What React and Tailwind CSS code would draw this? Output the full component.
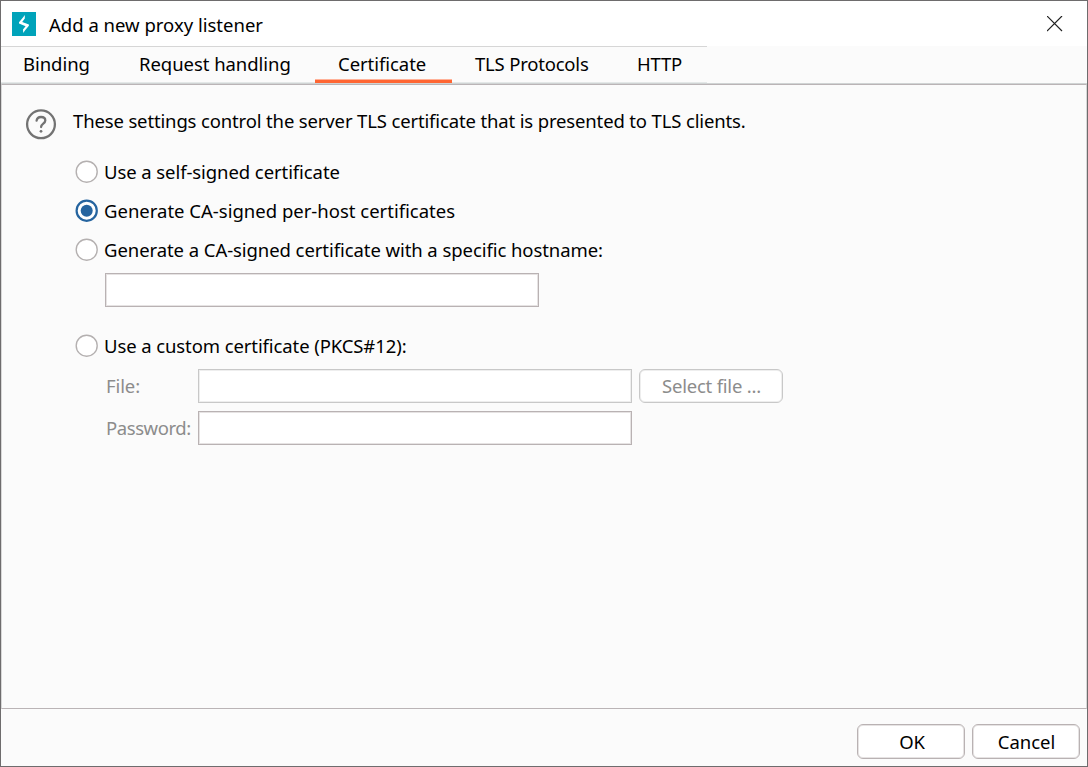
import React from "react";

const tabs = [
  { label: "Binding", box: "w-[90px] pl-[22px]", track: "tracking-[-0.05px]" },
  { label: "Request handling", box: "w-[224px] pl-[48px]", track: "tracking-[-0.05px]" },
  { label: "Certificate", box: "w-[137px] pl-[23px]", track: "tracking-[-0.05px]", active: true },
  { label: "TLS Protocols", box: "w-[137px] pl-[23px]", track: "tracking-[-0.2px]" },
  { label: "HTTP", box: "w-[118px] pl-[48px]", track: "tracking-[-0.2px]" },
];

function Radio({ label, checked, track }) {
  return (
    <label className="flex h-[39px] items-center">
      <svg className="mr-[5px] size-6 shrink-0" viewBox="0 0 24 24" fill="none">
        {checked ? (
          <>
            <circle cx="11.7" cy="11.7" r="10.1" fill="#fff" stroke="#25649f" strokeWidth="2.2" />
            <circle cx="11.7" cy="11.7" r="6" fill="#25649f" />
          </>
        ) : (
          <circle cx="11.7" cy="11.7" r="10.5" fill="#fff" stroke="#b4b0b0" strokeWidth="1.4" />
        )}
      </svg>
      <span className={track}>{label}</span>
    </label>
  );
}

function Titlebar() {
  return (
    <header className="flex h-[45px] shrink-0 items-center bg-white pl-[11px]">
      <svg className="size-6" viewBox="0 0 24 24">
        <rect width="24" height="24" fill="#00a3ba" />
        <path d="M12.8 3 L12.8 6.4 L10.2 9.9 L16.9 12.5 L16.9 13.7 L12.9 18.6 L11.3 21 L11 17.4 L13.6 14.2 L7 11.5 L7 10.3 L11.2 5.2 Z" fill="#fff" />
      </svg>
      <h1 className="ml-[13px] grow pt-[3px]">Add a new proxy listener</h1>
      <svg className="mr-[24px] size-4" viewBox="0 0 16 16" stroke="#222" strokeWidth="1.2">
        <path d="M0 0 L15 15 M15 0 L0 15" />
      </svg>
    </header>
  );
}

export default function App() {
  return (
    <div className="flex h-[767px] w-[1088px] flex-col overflow-hidden whitespace-nowrap border border-[#6e6c6d] bg-[#fbfbfb] font-['Noto_Sans',sans-serif] text-[18.5px] leading-6 text-black">
      <Titlebar />
      <nav className="flex h-[38px] shrink-0 border-b border-[#d0d4d4]">
        {tabs.map((t) => (
          <div key={t.label} className={`relative flex h-[37px] items-center border-b border-t border-b-[#e4e8e8] border-t-[#d6d6d6] pb-px ${t.box}`}>
            <span className={t.track}>{t.label}</span>
            {t.active && <span className="absolute -bottom-px left-0 h-[4px] w-full border-t border-[#ffb299] bg-[#ff6633]" />}
          </div>
        ))}
      </nav>
      <main className="flex grow flex-col border border-[#bab4b6] border-x-[#d8d8d8]">
        <div className="flex h-[67px] items-start">
          <svg className="ml-[23px] mt-[23px] size-8 shrink-0" viewBox="0 0 32 32" fill="none" stroke="#737373">
            <circle cx="16" cy="16.3" r="13.9" strokeWidth="2.3" />
            <path d="M11.6 12.7 C11.9 10.3 13.7 9 16 9 C18.6 9 20.3 10.4 20.3 12.5 C20.3 15.5 16.1 15.8 16.1 19" strokeWidth="2.3" strokeLinecap="round" />
            <circle cx="16" cy="23.3" r="1.4" fill="#737373" stroke="none" />
          </svg>
          <p className="ml-4 mt-[24px] tracking-[-0.145px]">These settings control the server TLS certificate that is presented to TLS clients.</p>
        </div>
        <div className="flex flex-col pl-[73px]">
          <Radio label="Use a self-signed certificate" track="tracking-[-0.08px]" />
          <Radio label="Generate CA-signed per-host certificates" track="tracking-[0px]" checked />
          <Radio label="Generate a CA-signed certificate with a specific hostname:" track="tracking-[-0.07px]" />
          <div className="ml-[30px] mt-[4px] h-[34px] w-[434px] border border-[#b9b2b3] bg-white shadow-[inset_0_0_0_1px_#e6e3e3]" />
          <div className="mt-[19px]">
            <Radio label="Use a custom certificate (PKCS#12):" track="tracking-[-0.1px]" />
          </div>
          <div className="ml-[31px] mt-[4px] flex h-[34px] items-center text-[#8c8c8c]">
            <span className="w-[92px] tracking-[-0.1px]">File:</span>
            <div className="h-[34px] w-[434px] border border-[#c8c8c8] bg-white shadow-[inset_0_0_0_1px_#eeeeee]" />
            <button className="ml-[7px] h-[34px] w-[144px] rounded-[6px] border border-[#c8c8c8] bg-white pl-px tracking-[-0.22px] shadow-[inset_0_0_0_1px_#eeeeee]">Select file ...</button>
          </div>
          <div className="ml-[31px] mt-[8px] flex h-[34px] items-center text-[#8c8c8c]">
            <span className="w-[92px] tracking-[-0.42px]">Password:</span>
            <div className="h-[34px] w-[434px] border border-[#b9b2b3] bg-white shadow-[inset_0_0_0_1px_#e6e3e3]" />
          </div>
        </div>
      </main>
      <footer className="flex h-[57px] shrink-0 items-start justify-end gap-[7px] pr-[7px] pt-[15px]">
        <button className="h-[35px] w-[108px] rounded-[6px] border border-[#b9b2b3] bg-white pl-[2px] tracking-[-0.2px] shadow-[inset_0_0_0_1px_#e6e3e3]">OK</button>
        <button className="h-[35px] w-[108px] rounded-[6px] border border-[#b9b2b3] bg-white pl-px shadow-[inset_0_0_0_1px_#e6e3e3]">Cancel</button>
      </footer>
    </div>
  );
}
